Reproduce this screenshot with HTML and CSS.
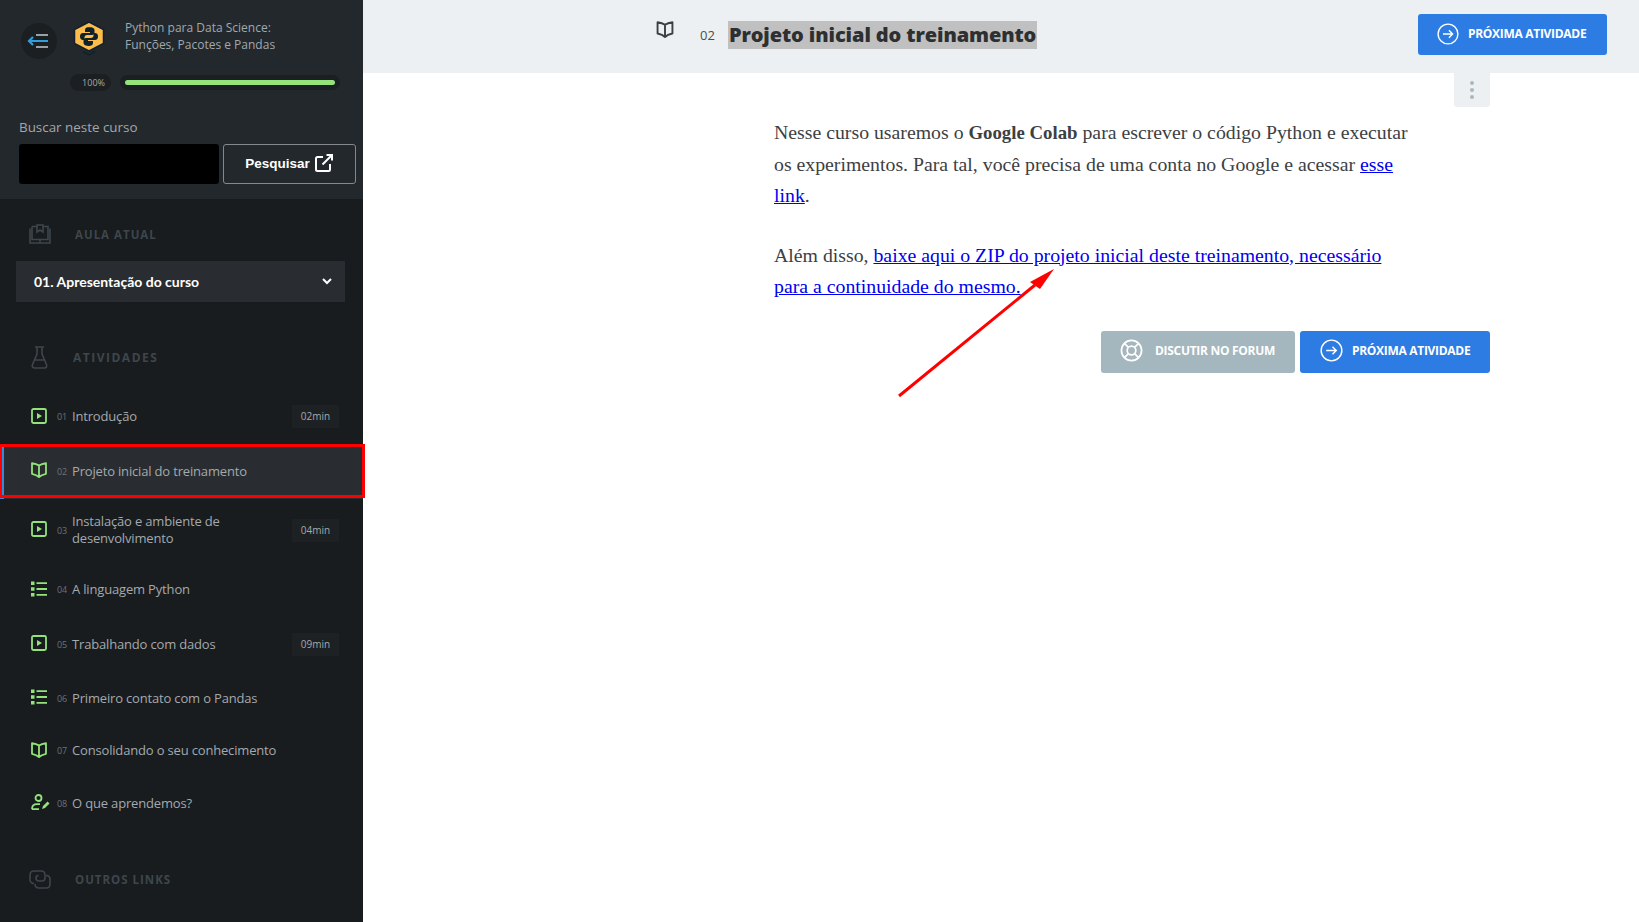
FILE: index.html
```html
<!DOCTYPE html>
<html lang="pt-BR">
	<head>
		<meta charset="UTF-8">
		<title>Projeto inicial do treinamento</title>
		<link rel="stylesheet" href="styles.css">
	</head>
	<body>
		<svg class="defs" width="0" height="0">
			<symbol id="i-play" viewBox="0 0 16 16"><rect x="1" y="1" width="14" height="14" rx="1.5" fill="none" stroke="currentColor" stroke-width="1.8"/><path d="M6 5l5 3-5 3z" fill="currentColor"/></symbol>
			<symbol id="i-book" viewBox="0 0 16 16"><path d="M8 3.600C6.200 2.400 3.600 1.600 1 1.200v10.600c2.600.6 5.200 1.500 7 3.200 1.800-1.700 4.400-2.600 7-3.200V1.200C12.400 1.600 9.800 2.400 8 3.600zM8 3.600V15" fill="none" stroke="currentColor" stroke-width="1.800" stroke-linejoin="round"/></symbol>
			<symbol id="i-list" viewBox="0 0 16 16"><path d="M0 .5h3.500V4H0zM0 6.200h3.500v3.500H0zM0 12h3.500v3.500H0z" fill="currentColor"/><path d="M5.500 2.200H16M5.500 8H16M5.500 13.800H16" stroke="currentColor" stroke-width="1.800"/></symbol>
			<symbol id="i-next" viewBox="0 0 24 24"><circle cx="12" cy="12" r="10.800" fill="none" stroke="currentColor" stroke-width="1.500"/><path d="M6.500 12h10.500M13 8l4 4-4 4" fill="none" stroke="currentColor" stroke-width="1.500"/></symbol>
		</svg>
		<div class="page">
			<aside class="sidebar">
				<div class="sidebar-head">
					<div class="course">
						<span class="back">
							<svg width="21" height="16" viewBox="0 0 21 16"><path d="M9 2h12M9 14h12" stroke="#9aa0a4" stroke-width="2"/><path d="M21 8H2M6 4L2 8l4 4" fill="none" stroke="#2f9fdc" stroke-width="2.200"/></svg>
						</span>
						<svg class="logo" width="32" height="35" viewBox="0 0 32 35">
							<path d="M16 1l14.500 7.500v14L16 30 1.500 22.500v-14z" fill="#fdbd4b" stroke="#10212e" stroke-width="1.500"/>
							<path d="M10 30.500l6 3.500 6-3.500" fill="none" stroke="#10212e" stroke-width="1.500"/>
							<path d="M16.500 6c-3 0-4.500 1-4.500 3v2h5v1h-7c-2 0-3 1.500-3 3.500s1 3.500 3 3.500h1.500v-2.500c0-1.500 1-2.500 2.500-2.500h5c1.500 0 2.500-1 2.500-2.500V9c0-2-2.500-3-5.500-3z" fill="#10212e"/>
							<path d="M15.500 25c3 0 4.500-1 4.500-3v-2h-5v-1h7c2 0 3-1.500 3-3.500s-1-3.500-3-3.500h-1.500v2.500c0 1.500-1 2.500-2.500 2.500h-5c-1.500 0-2.500 1-2.500 2.500V22c0 2 2.500 3 5.500 3z" fill="#10212e"/>
						</svg>
						<p class="course-name">Python para Data Science:<br>Funções, Pacotes e Pandas</p>
					</div>
					<div class="progress">
						<span class="percent">100%</span>
						<div class="track"><div class="fill"></div></div>
					</div>
					<label class="search-label">Buscar neste curso</label>
					<div class="search">
						<span class="search-input"></span>
						<button type="button" class="search-btn">Pesquisar
							<svg width="20" height="20" viewBox="0 0 20 20"><path d="M9 4H3.500A1.500 1.500 0 0 0 2 5.500v11A1.500 1.500 0 0 0 3.500 18h11a1.500 1.500 0 0 0 1.500-1.500V11M8.500 11.500L18 2M12.500 2H18v5.500" fill="none" stroke="#fff" stroke-width="2"/></svg>
						</button>
					</div>
				</div>

				<div class="section-title title-lesson">
					<svg width="22" height="20" viewBox="0 0 22 20"><path d="M3 2.500h5M14 2.500h5v13H3v-13M8 1h6v7l-3-2-3 2zM1 4.500v14.500h20V4.500M11 15.500v3" fill="none" stroke="#3e464b" stroke-width="1.600"/></svg>
					<span>AULA ATUAL</span>
				</div>
				<div class="lesson-select">
					<span>01. Apresentação do curso</span>
					<svg width="10" height="7" viewBox="0 0 10 7"><path d="M1 1l4 4 4-4" fill="none" stroke="#fff" stroke-width="2"/></svg>
				</div>

				<div class="section-title title-activities">
					<svg width="17" height="23" viewBox="0 0 17 23"><path d="M4 1h9M6 1v7L1.500 18.500C.8 20.500 1.800 22 3.500 22h10c1.700 0 2.700-1.500 2-3.500L11 8V1M4 14h9" fill="none" stroke="#3e464b" stroke-width="1.600"/></svg>
					<span>ATIVIDADES</span>
				</div>
				<ul class="activities">
					<li class="activity loose"><svg class="a-icon"><use href="#i-play"/></svg><span class="num">01</span><span class="name">Introdução</span><span class="time">02min</span></li>
					<li class="activity active"><svg class="a-icon"><use href="#i-book"/></svg><span class="num">02</span><span class="name">Projeto inicial do treinamento</span></li>
					<li class="activity tall"><svg class="a-icon"><use href="#i-play"/></svg><span class="num">03</span><span class="name">Instalação e ambiente de desenvolvimento</span><span class="time">04min</span></li>
					<li class="activity loose"><svg class="a-icon"><use href="#i-list"/></svg><span class="num">04</span><span class="name">A linguagem Python</span></li>
					<li class="activity"><svg class="a-icon"><use href="#i-play"/></svg><span class="num">05</span><span class="name">Trabalhando com dados</span><span class="time">09min</span></li>
					<li class="activity"><svg class="a-icon"><use href="#i-list"/></svg><span class="num">06</span><span class="name">Primeiro contato com o Pandas</span></li>
					<li class="activity short"><svg class="a-icon"><use href="#i-book"/></svg><span class="num">07</span><span class="name">Consolidando o seu conhecimento</span></li>
					<li class="activity">
						<svg class="a-icon wide" viewBox="0 0 19 16"><circle cx="7.500" cy="4" r="3" fill="none" stroke="currentColor" stroke-width="1.800"/><path d="M1 15.200c0-3.500 2-5 5-5h3M1 15.200h7" fill="none" stroke="currentColor" stroke-width="1.800"/><path d="M11 15l1-3 4.500-4.500 2 2-4.500 4.500z" fill="currentColor"/></svg>
						<span class="num">08</span><span class="name">O que aprendemos?</span>
					</li>
				</ul>

				<div class="section-title title-links">
					<svg width="22" height="19" viewBox="0 0 22 19"><path d="M5 13.500C2.500 13.500 1 12 1 9.500V5c0-2.500 1.500-4 4-4h7c2.500 0 4 1.500 4 4v3c0 2-1 3-3 3h-3c-2 0-3-1-3-3 0-1.500 1-2.500 2.500-2.500M17 5.500c2.500 0 4 1.500 4 4V14c0 2.500-1.500 4-4 4h-7c-2.500 0-4-1.500-4-4" fill="none" stroke="#3e464b" stroke-width="1.600"/></svg>
					<span>OUTROS LINKS</span>
				</div>
				<div class="link-row">
					<svg width="14" height="16" viewBox="0 0 14 16"><rect x="1" y="1" width="12" height="14" rx="2" fill="none" stroke="#c3cdd0" stroke-width="1.600"/></svg>
					<span class="link-name">Voltar para Dashboard</span>
				</div>
			</aside>

			<main class="main">
				<header class="topbar">
					<svg class="top-book" width="18" height="17"><use href="#i-book"/></svg>
					<span class="top-num">02</span>
					<h1 class="top-title">Projeto inicial do treinamento</h1>
					<button type="button" class="btn btn-blue btn-top"><svg width="22" height="22"><use href="#i-next"/></svg>PRÓXIMA ATIVIDADE</button>
				</header>
				<div class="content">
					<div class="tools"><span class="dots"><i></i><i></i><i></i></span></div>
					<div class="text">
						<p>Nesse curso usaremos o <strong>Google Colab</strong> para escrever o código Python e executar os experimentos. Para tal, você precisa de uma conta no Google e acessar <a href="#">esse link</a>.</p>
						<p>Além disso, <a href="#">baixe aqui o ZIP do projeto inicial deste treinamento, necessário para a continuidade do mesmo.</a></p>
					</div>
					<div class="actions">
						<button type="button" class="btn btn-gray">
							<svg width="23" height="23" viewBox="0 0 24 24"><g fill="none" stroke="currentColor" stroke-width="1.800"><circle cx="12" cy="12" r="10.500"/><circle cx="12" cy="12" r="4.500"/><path d="M4.600 4.600l4.200 4.200M19.400 4.600l-4.200 4.200M4.600 19.400l4.200-4.200M19.400 19.400l-4.200-4.200"/></g></svg>
							DISCUTIR NO FORUM
						</button>
						<button type="button" class="btn btn-blue"><svg width="23" height="23"><use href="#i-next"/></svg>PRÓXIMA ATIVIDADE</button>
					</div>
				</div>
			</main>
		</div>

		<!-- marcacoes por cima da captura -->
		<div class="mark-box"></div>
		<svg class="mark-arrow" width="170" height="135" viewBox="0 0 170 135">
			<path d="M6 132L142 21" stroke="#f00" stroke-width="3"/>
			<path d="M161 5L137 18l10 7z" fill="#f00"/>
		</svg>
	</body>
</html>
```

FILE: styles.css
```css
*{
	margin: 0;
	padding: 0;
	box-sizing: border-box;
}
html,body{
	height: 100%;
	overflow: hidden;
}
body{
	position: relative;
	font-family: "Open Sans", "Liberation Sans", sans-serif;
	background: #fff;
}
.defs{
	position: absolute;
}
.page{
	display: flex;
	height: 922px;
}

/* barra lateral */
.sidebar{
	width: 363px;
	flex: none;
	height: 922px;
	overflow: hidden;
	background: #181c1f;
	color: #a4a9ad;
}
.sidebar-head{
	height: 199px;
	padding: 21px 7px 0 19px;
	background: #23282c;
}
.course{
	display: flex;
	align-items: flex-start;
}
.back{
	width: 36px;
	height: 36px;
	margin: 2px 16px 0 2px;
	padding-right: 3px;
	display: flex;
	align-items: center;
	justify-content: center;
	border-radius: 50%;
	background: #1b1f22;
}
.logo{
	flex: none;
}
.course-name{
	margin: -2px 0 0 20px;
	font-size: 12px;
	line-height: 17px;
	color: #a0a9af;
}
.progress{
	display: flex;
	align-items: center;
	margin: 15px 0 0 51px;
	height: 17px;
}
.percent{
	width: 41px;
	height: 17px;
	padding-right: 6px;
	border-radius: 9px;
	background: #1b1f22;
	font-size: 9px;
	line-height: 17px;
	text-align: right;
	color: #a4a9ad;
}
.track{
	width: 220px;
	height: 15px;
	margin-left: 9px;
	padding: 5px;
	border-radius: 8px;
	background: #1b1f22;
}
.fill{
	height: 5px;
	border-radius: 3px;
	background: #94e27a;
}
.search-label{
	display: block;
	margin-top: 27px;
	font-size: 13.4px;
	line-height: 18px;
	color: #a4a7aa;
}
.search{
	display: flex;
	gap: 4px;
	margin-top: 8px;
}
.search-input{
	width: 200px;
	height: 40px;
	border-radius: 3px;
	background: #000;
}
.search-btn{
	width: 133px;
	height: 40px;
	padding-bottom: 2px;
	display: flex;
	align-items: center;
	justify-content: center;
	gap: 4px;
	border: 1px solid #85898c;
	border-radius: 3px;
	background: transparent;
	color: #fff;
	font-family: "Liberation Sans", sans-serif;
	font-size: 13.5px;
	font-weight: bold;
}
.section-title{
	display: flex;
	align-items: center;
	padding-left: 29px;
	font-size: 11.5px;
	font-weight: 700;
	letter-spacing: 1px;
	color: #3e464b;
}
.section-title span{
	margin-left: 24px;
}
.title-lesson{
	margin-top: 25px;
	height: 20px;
}
.title-activities{
	margin-top: 44px;
	padding-left: 31px;
	height: 23px;
	font-size: 12px;
	letter-spacing: 1.5px;
}
.title-activities span{
	margin-left: 25px;
}
.title-links{
	margin-top: 39px;
	height: 19px;
}
.lesson-select{
	display: flex;
	align-items: center;
	justify-content: space-between;
	width: 329px;
	height: 41px;
	margin: 17px 0 0 16px;
	padding: 0 13px 0 18px;
	background: #292d31;
	color: #fff;
	font-family: Lato, "Open Sans", sans-serif;
	font-size: 14px;
	font-weight: 700;
}
.activities{
	list-style: none;
	margin-top: 21px;
}
.activity{
	display: flex;
	align-items: center;
	min-height: 54px;
	padding: 0 24px 2px 31px;
	font-size: 13px;
	letter-spacing: -.17px;
	line-height: 17px;
	color: #a4a9ad;
}
.activity.loose{
	min-height: 55px;
}
.activity.tall{
	min-height: 64px;
}
.activity.short{
	min-height: 51px;
}
.activity.active{
	background: #292d31;
	box-shadow: inset 4px 0 0 #3f86d8;
}
.a-icon{
	width: 16px;
	height: 16px;
	flex: none;
	margin-top: -2px;
	color: #94e27a;
}
.a-icon.wide{
	width: 19px;
	margin-right: -3px;
}
.num{
	width: 25px;
	padding-left: 10px;
	flex: none;
	font-size: 9px;
	color: #6d7378;
}
.name{
	flex: 1;
	padding-right: 20px;
}
.time{
	width: 47px;
	height: 23px;
	flex: none;
	margin-left: auto;
	background: #1d2124;
	font-size: 10px;
	letter-spacing: 0;
	line-height: 23px;
	text-align: center;
	color: #a4a9ad;
}
.link-row{
	display: flex;
	align-items: flex-start;
	gap: 25px;
	margin-top: 30px;
	padding-left: 33px;
	font-size: 13px;
	line-height: 17px;
	color: #a4a9ad;
}
.link-row svg{
	margin-top: 3px;
}

/* conteudo */
.main{
	flex: 1;
	min-width: 0;
}
.topbar{
	display: flex;
	align-items: center;
	height: 73px;
	padding: 0 32px 4px 293px;
	background: #edf0f2;
}
.top-book{
	margin-top: -11px;
	color: #3c4043;
}
.top-num{
	margin-left: 26px;
	font-size: 13px;
	color: #4a4e51;
}
.top-title{
	margin-left: 13px;
	padding: 0 1px;
	background: #c0c0c0;
	font-size: 20px;
	line-height: 28px;
	font-weight: 800;
	letter-spacing: -.1px;
	color: #2d2f31;
}
.btn{
	display: flex;
	align-items: center;
	padding-bottom: 2px;
	border: 0;
	border-radius: 3px;
	color: #fff;
	font-family: "Open Sans", sans-serif;
	font-size: 12px;
	font-weight: 700;
	letter-spacing: -.3px;
}
.btn-blue{
	width: 190px;
	height: 42px;
	padding-left: 20px;
	gap: 9px;
	background: #2c7ce3;
}
.btn-top{
	width: 189px;
	height: 41px;
	margin-left: auto;
	padding-left: 19px;
	gap: 9px;
}
.btn-gray{
	width: 194px;
	height: 42px;
	padding-left: 19px;
	gap: 12px;
	background: #a4b6be;
}
.content{
	width: 716px;
	margin-left: 411px;
}
.tools{
	display: flex;
	justify-content: flex-end;
}
.dots{
	display: flex;
	flex-direction: column;
	align-items: center;
	justify-content: center;
	gap: 3px;
	width: 36px;
	height: 34px;
	border-radius: 0 0 3px 3px;
	background: #edf0f2;
}
.dots i{
	width: 4px;
	height: 4px;
	border-radius: 50%;
	background: #a9b7be;
}
.text{
	width: 640px;
	margin-top: 10px;
	font-family: "Liberation Serif", serif;
	font-size: 19.8px;
	line-height: 31.5px;
	color: #3d4043;
}
.text p{
	margin-bottom: 28px;
}
.text strong{
	font-size: 18.8px;
}
.text a{
	color: #00e;
}
.actions{
	display: flex;
	justify-content: flex-end;
	gap: 5px;
	margin-top: 16px;
}

/* marcacoes da captura */
.mark-box{
	position: absolute;
	left: 0;
	top: 444px;
	width: 365px;
	height: 54px;
	border: 3px solid #f00;
	border-left-width: 2px;
}
.mark-arrow{
	position: absolute;
	left: 893px;
	top: 264px;
}
```
